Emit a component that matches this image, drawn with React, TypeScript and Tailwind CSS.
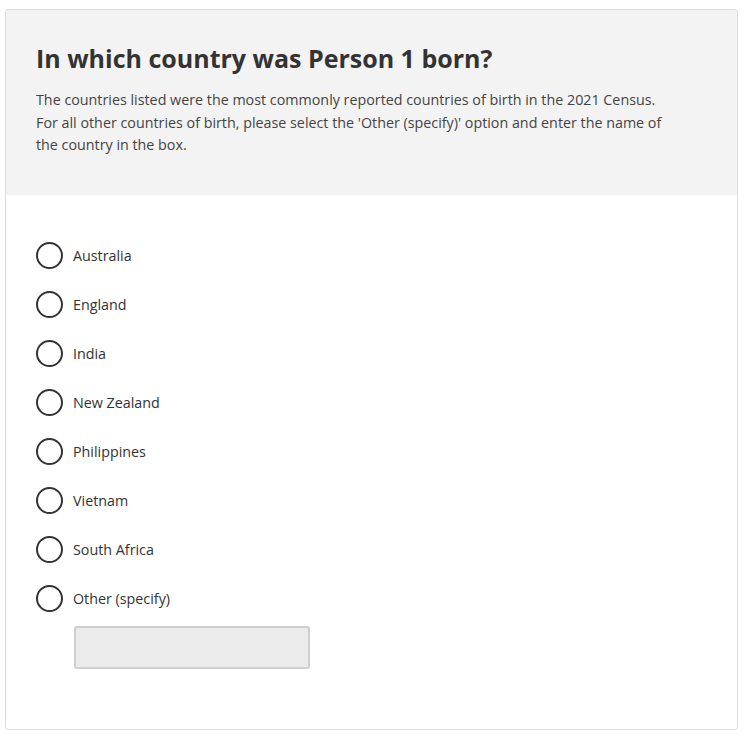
const options = [
  "Australia",
  "England",
  "India",
  "New Zealand",
  "Philippines",
  "Vietnam",
  "South Africa",
  "Other (specify)",
];

function Radio({ label }: { label: string }) {
  return (
    <label className="flex h-[49px] items-center gap-[10px] cursor-pointer">
      <span className="block h-[27px] w-[27px] shrink-0 rounded-full border-2 border-[#333333] bg-white" />
      <span className="text-[14.3px] text-[#333333]">{label}</span>
    </label>
  );
}

export default function App() {
  return (
    <main className="min-h-screen bg-white pl-[5px] pt-[9px] font-['Open_Sans',sans-serif]">
      <div className="flex h-[721px] w-[733px] flex-col overflow-hidden rounded-[3px] border border-[#dcdcdc]">
        <div className="h-[185px] bg-[#f3f3f3] px-[30px] pt-[31px]">
          <h1 className="text-[25px] font-bold leading-[34px] text-[#333333]">
            In which country was Person 1 born?
          </h1>
          <p className="mt-[14px] text-[14.3px] leading-[22.5px] text-[#444444]">
            The countries listed were the most commonly reported countries of birth in the 2021 Census.
            <br />
            For all other countries of birth, please select the 'Other (specify)' option and enter the name of
            <br />
            the country in the box.
          </p>
        </div>
        <div className="flex flex-col px-[30px] pt-[36px]">
          {options.map((o) => (
            <Radio key={o} label={o} />
          ))}
          <input
            type="text"
            aria-label="Other country"
            className="ml-[38px] mt-[3px] h-[43px] w-[236px] rounded-[3px] border-2 border-[#cfcfcf] bg-[#ebebeb] px-2 text-[14px] outline-none"
          />
        </div>
      </div>
    </main>
  );
}
